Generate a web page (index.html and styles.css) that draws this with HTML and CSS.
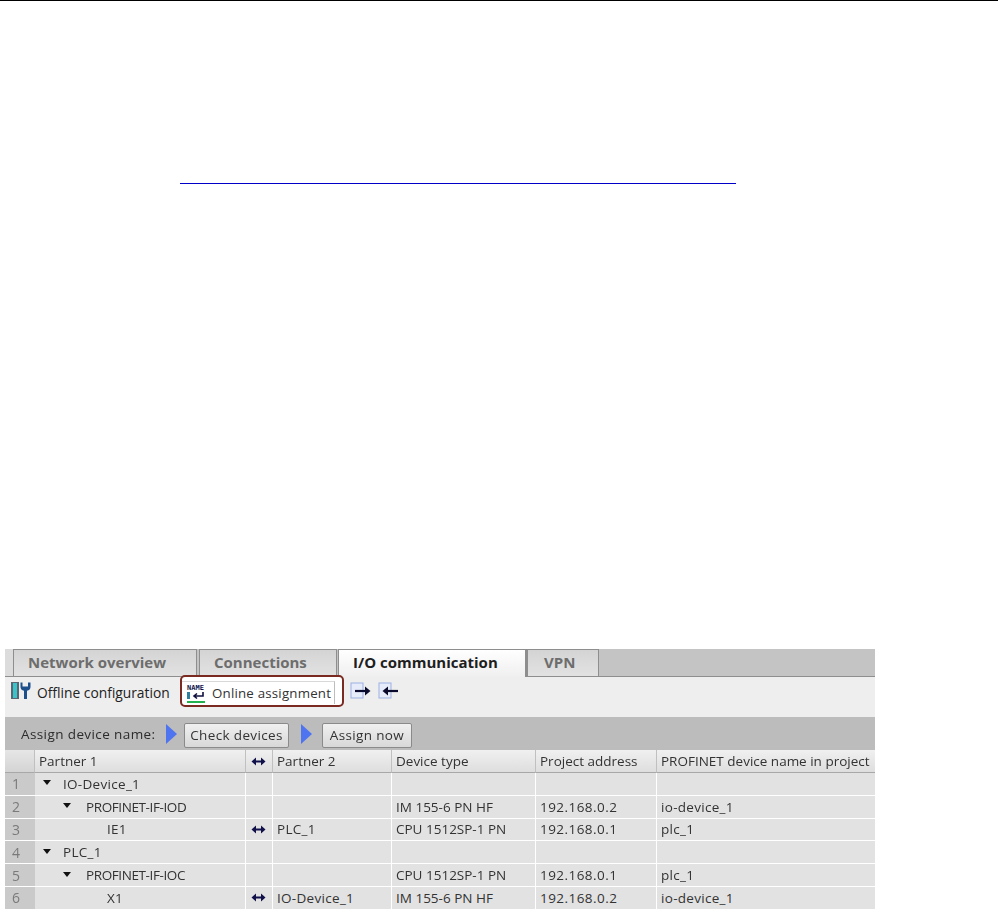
FILE: index.html
```html
<!DOCTYPE html>
<html lang="en">
<head>
<meta charset="utf-8">
<title>I/O communication</title>
<link rel="stylesheet" href="styles.css">
</head>
<body>
<div class="top-rule"></div>
<div class="link-rule"></div>
<section class="panel">
  <div class="tabs">
    <div class="tab tab-network">Network overview</div>
    <div class="tab tab-conn">Connections</div>
    <div class="tab tab-io active">I/O communication</div>
    <div class="tab tab-vpn">VPN</div>
  </div>
  <div class="toolbar">
    <svg class="ico-offline" width="20" height="20" viewBox="0 0 20 20">
      <rect x="0" y="1" width="8" height="17" fill="#5a6672"/>
      <rect x="2" y="2" width="4" height="15" fill="#38c4c8"/>
      <path d="M9.500 1.500v4.500q0 3 3.500 3.700V18h3V9.700q3.500-.7 3.500-3.700V1.500L17 1.500v4h-5.500v-4z" fill="#1d4f8c"/>
    </svg>
    <span class="offline-label">Offline configuration</span>
    <div class="online-btn">
      <div class="online-inner">
        <svg class="ico-name" width="23" height="22" viewBox="0 0 23 22">
          <text x="1" y="8" class="name-text">NAME</text>
          <rect x="1" y="10" width="3" height="7" fill="#2f7f9f"/>
          <path d="M17 10v4H8M11 11.500L8 14l3 2.500" fill="none" stroke="#101040" stroke-width="1.600"/>
          <rect x="1" y="19" width="18" height="2" fill="#22b14c"/>
        </svg>
        <span>Online assignment</span>
      </div>
    </div>
    <svg class="ico-arrow first" width="22" height="18" viewBox="0 0 22 18">
      <rect x="1" y="1" width="12" height="15" fill="#e6ecfa" stroke="#9bb0e0"/>
      <path d="M5 9h11" fill="none" stroke="#0a0a2c" stroke-width="2.200"/>
      <path d="M15 4.500L20.500 9 15 13.500z" fill="#0a0a2c"/>
    </svg>
    <svg class="ico-arrow" width="22" height="18" viewBox="0 0 22 18">
      <rect x="1" y="1" width="12" height="15" fill="#e6ecfa" stroke="#9bb0e0"/>
      <path d="M20 9H9" fill="none" stroke="#0a0a2c" stroke-width="2.200"/>
      <path d="M10 4.500L4.500 9 10 13.500z" fill="#0a0a2c"/>
    </svg>
  </div>
  <div class="assign-bar">
    <span class="assign-label">Assign device name:</span>
    <span class="play"></span>
    <button class="btn btn-check">Check devices</button>
    <span class="play"></span>
    <button class="btn btn-assign">Assign now</button>
  </div>
  <div class="grid-row header">
    <div class="cell num"></div>
    <div class="cell">Partner 1</div>
    <div class="cell link-cell"><svg class="dbl" width="15" height="9" viewBox="0 0 15 9"><path d="M3 4.500h9" stroke="#10104a" stroke-width="2"/><path d="M5 .5L.5 4.500 5 8.500zM10 .5l4.500 4L10 8.500z" fill="#10104a"/></svg></div>
    <div class="cell">Partner 2</div>
    <div class="cell">Device type</div>
    <div class="cell">Project address</div>
    <div class="cell">PROFINET device name in project</div>
  </div>
  <div class="grid-row">
    <div class="cell num">1</div>
    <div class="cell tree lvl0"><span class="caret"></span>IO-Device_1</div>
    <div class="cell"></div><div class="cell"></div><div class="cell"></div><div class="cell"></div><div class="cell"></div>
  </div>
  <div class="grid-row">
    <div class="cell num">2</div>
    <div class="cell tree lvl1 iface"><span class="caret"></span>PROFINET-IF-IOD</div>
    <div class="cell"></div><div class="cell"></div>
    <div class="cell dev">IM 155-6 PN HF</div><div class="cell addr">192.168.0.2</div><div class="cell">io-device_1</div>
  </div>
  <div class="grid-row">
    <div class="cell num">3</div>
    <div class="cell tree lvl2">IE1</div>
    <div class="cell link-cell"><svg class="dbl" width="15" height="9" viewBox="0 0 15 9"><path d="M3 4.500h9" stroke="#10104a" stroke-width="2"/><path d="M5 .5L.5 4.500 5 8.500zM10 .5l4.500 4L10 8.500z" fill="#10104a"/></svg></div>
    <div class="cell">PLC_1</div>
    <div class="cell dev">CPU 1512SP-1 PN</div><div class="cell addr">192.168.0.1</div><div class="cell">plc_1</div>
  </div>
  <div class="grid-row">
    <div class="cell num">4</div>
    <div class="cell tree lvl0"><span class="caret"></span>PLC_1</div>
    <div class="cell"></div><div class="cell"></div><div class="cell"></div><div class="cell"></div><div class="cell"></div>
  </div>
  <div class="grid-row">
    <div class="cell num">5</div>
    <div class="cell tree lvl1 iface"><span class="caret"></span>PROFINET-IF-IOC</div>
    <div class="cell"></div><div class="cell"></div>
    <div class="cell dev">CPU 1512SP-1 PN</div><div class="cell addr">192.168.0.1</div><div class="cell">plc_1</div>
  </div>
  <div class="grid-row">
    <div class="cell num">6</div>
    <div class="cell tree lvl2">X1</div>
    <div class="cell link-cell"><svg class="dbl" width="15" height="9" viewBox="0 0 15 9"><path d="M3 4.500h9" stroke="#10104a" stroke-width="2"/><path d="M5 .5L.5 4.500 5 8.500zM10 .5l4.500 4L10 8.500z" fill="#10104a"/></svg></div>
    <div class="cell">IO-Device_1</div>
    <div class="cell dev">IM 155-6 PN HF</div><div class="cell addr">192.168.0.2</div><div class="cell">io-device_1</div>
  </div>
</section>
</body>
</html>
```
FILE: styles.css
```css
* { box-sizing: border-box; }
html, body { margin: 0; padding: 0; background: #fff; }
body { width: 998px; height: 912px; overflow: hidden; font-family: "Open Sans", "Noto Sans", sans-serif; color: #333; }

.top-rule { height: 1px; background: #000; }
.link-rule { height: 1px; width: 556px; margin: 182px 0 0 180px; background: #0000c8; }

.panel { width: 870px; margin: 465px 0 0 5px; font-size: 13.500px; letter-spacing: 0.300px; filter: blur(0.35px); }

.tabs { display: flex; height: 28px; padding-left: 8px; background: linear-gradient(90deg, #dcdcdc 8px, #c4c4c4 8px); border-bottom: 1px solid #8e8e8e; letter-spacing: 0; }
.tab { height: 27px; padding-left: 14px; font-size: 15px; font-weight: 700; line-height: 25px; color: #6d6d6d; background: linear-gradient(#d4d4d4, #e2e2e2); border: 1px solid #8e8e8e; border-bottom: 0; }
.tab-network { width: 184px; margin-right: 2px; }
.tab-conn { width: 138px; margin-right: 1px; }
.tab-io { width: 189px; height: 28px; color: #1e1e1e; background: linear-gradient(#ffffff, #efefef); border-right-width: 2px; }
.tab-vpn { width: 72px; padding-left: 16px; }

.toolbar { display: flex; align-items: center; height: 40px; padding: 0 0 12px 6px; background: #eeeeee; letter-spacing: 0; }
.ico-offline { flex: none; }
.offline-label { margin: 3px 0 0 6px; width: 143px; color: #222; font-size: 13.800px; }
.online-btn { flex: none; display: flex; width: 164px; height: 32px; padding: 4px 0 1px 0; background: #fff; border: 2px solid #7a2a20; border-radius: 5px; font-size: 13.300px; letter-spacing: 0.200px; color: #333; }
.online-inner { display: flex; align-items: center; width: 153px; padding-left: 4px; border-right: 1px solid #bdbdbd; border-top: 1px solid #d8d8d8; }
.online-inner span { margin-left: 3px; }
.name-text { font-family: "DejaVu Sans Mono", monospace; font-size: 7px; font-weight: 700; letter-spacing: 0; fill: #12124a; }
.ico-arrow { flex: none; margin-left: 6px; }

.assign-bar { display: flex; align-items: center; height: 33px; padding-left: 16px; background: #bcbcbc; }
.assign-label { width: 145px; font-size: 13.500px; letter-spacing: 0.400px; color: #2c2c2c; }
.play { width: 0; height: 0; border-left: 11px solid #4f74f0; border-top: 10px solid transparent; border-bottom: 10px solid transparent; }
.btn { height: 25px; margin: 3px 0 0 7px; padding: 0; font: inherit; font-size: 13.500px; letter-spacing: 0.350px; color: #333; background: linear-gradient(#f0f0f0, #d8d8d8); border: 1px solid #8a8a8a; border-radius: 2px; }
.btn-check { width: 105px; margin-right: 12px; }
.btn-assign { width: 90px; margin-left: 10px; }

.grid-row { display: grid; grid-template-columns: 30px 211px 27px 119px 144px 121px 218px; height: 22.800px; }
.cell { display: flex; align-items: center; padding-left: 4px; background: #e2e2e2; border-right: 1px solid #fff; border-bottom: 1px solid #fff; color: #333; white-space: nowrap; }
.cell:last-child { border-right: 0; }
.cell.num { padding-left: 7px; font-size: 14px; color: #7a7a7a; background: #cacaca; border-right: 0; }
.dev { letter-spacing: 0; }
.addr { letter-spacing: 0.450px; }

.header { height: 23px; letter-spacing: 0; }
.header .cell { background: linear-gradient(#f0f0f0, #dedede); border-right: 1px solid #c0c0c0; border-bottom: 1px solid #a8a8a8; }
.header .cell:last-child { border-right: 0; }
.header .cell.num { background: linear-gradient(#e6e6e6, #d4d4d4); }

.link-cell { padding-left: 5px; }
.tree { padding-left: 0; }
.lvl0 { padding-left: 8px; }
.lvl1 { padding-left: 28px; }
.lvl2 { padding-left: 72px; }
.iface { letter-spacing: -0.400px; }
.caret { width: 0; height: 0; margin: 0 12px 2px 0; border-top: 5px solid #111; border-left: 4.500px solid transparent; border-right: 4.500px solid transparent; }
.lvl1 .caret { margin-right: 15px; }
```
